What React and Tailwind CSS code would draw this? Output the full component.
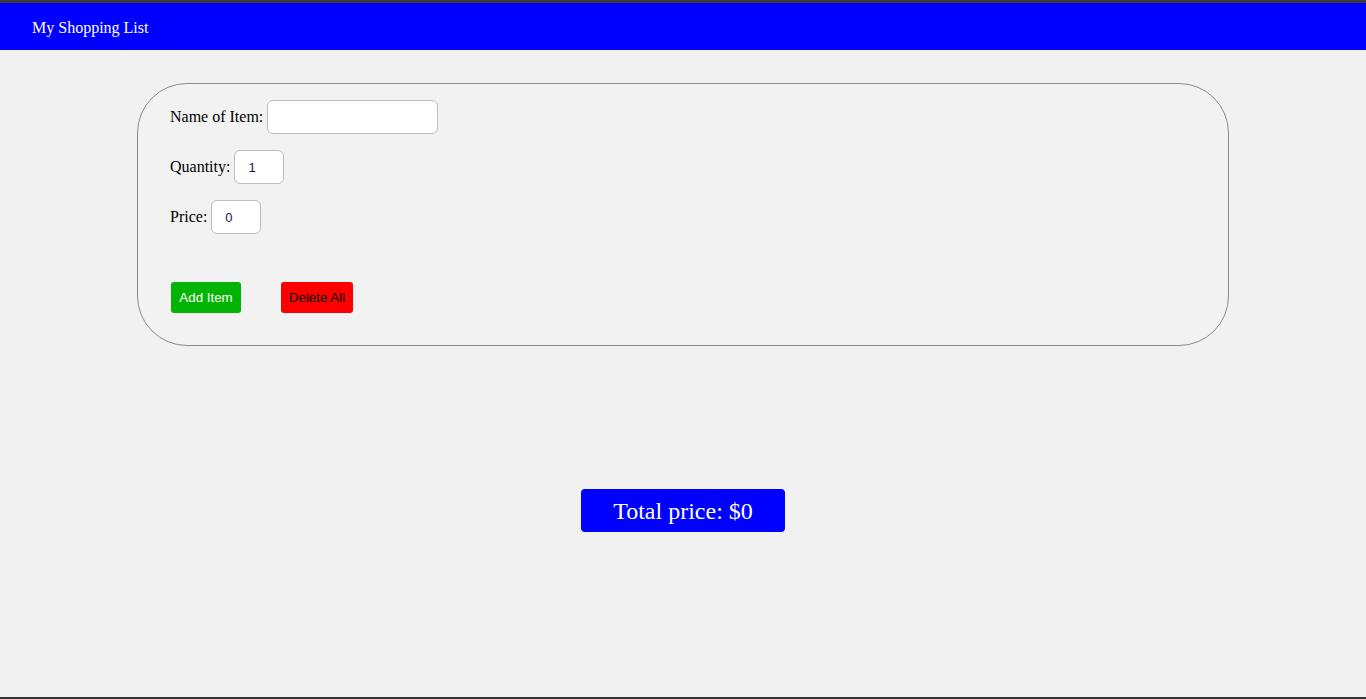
export default function App() {
  return (
    <div
      className="min-h-[699px] bg-[#f1f1f1] flex flex-col"
      style={{ fontFamily: '"Liberation Serif", "Times New Roman", serif' }}
    >
      <div className="h-[3px] bg-[#3a3a3a]" />
      {/* Header */}
      <header className="h-[47px] bg-[#0000ff] flex items-center pl-8">
        <span className="text-white text-[16px] leading-none pt-[2px]">My Shopping List</span>
      </header>

      {/* Form card */}
      <div className="w-[1092px] mx-auto mt-[33px] border border-[#8a8a8a] rounded-[50px] bg-[#f2f2f2] pl-8 pt-4 pb-8">
        <div className="flex items-center h-[34px] text-[16px] text-black">
          <label className="mr-1">Name of Item:</label>
          <input className="w-[171px] h-[34px] bg-white border border-[#bdbdbd] rounded-[6px] outline-none px-4 text-[13px]" />
        </div>
        <div className="flex items-center h-[34px] mt-4 text-[16px] text-black">
          <label className="mr-1">Quantity:</label>
          <input
            defaultValue="1"
            className="w-[50px] h-[34px] bg-white border border-[#bdbdbd] rounded-[6px] outline-none pl-[13px] text-[13px] text-[#10204a] font-['Liberation_Sans',Arial,sans-serif]"
          />
        </div>
        <div className="flex items-center h-[34px] mt-4 text-[16px] text-black">
          <label className="mr-1">Price:</label>
          <input
            defaultValue="0"
            className="w-[50px] h-[34px] bg-white border border-[#bdbdbd] rounded-[6px] outline-none pl-[13px] text-[13px] text-[#10204a] font-['Liberation_Sans',Arial,sans-serif]"
          />
        </div>
        <div className="flex items-center mt-[48px] pl-[1px] gap-[40px] font-['Liberation_Sans',Arial,sans-serif] text-[13.33px]">
          <button className="w-[70px] h-[31px] bg-[#04b404] text-white rounded-[3px]">Add Item</button>
          <button className="w-[72px] h-[31px] bg-[#ff0000] text-black rounded-[3px]">Delete All</button>
        </div>
      </div>

      {/* Total */}
      <div className="flex justify-center mt-[143px]">
        <div className="w-[204px] h-[43px] bg-[#0000ff] rounded-[4px] flex items-center justify-center text-white text-[24px]">
          Total price: $0
        </div>
      </div>

      <div className="flex-1" />
      <div className="h-[2px] bg-[#333333]" />
    </div>
  );
}
